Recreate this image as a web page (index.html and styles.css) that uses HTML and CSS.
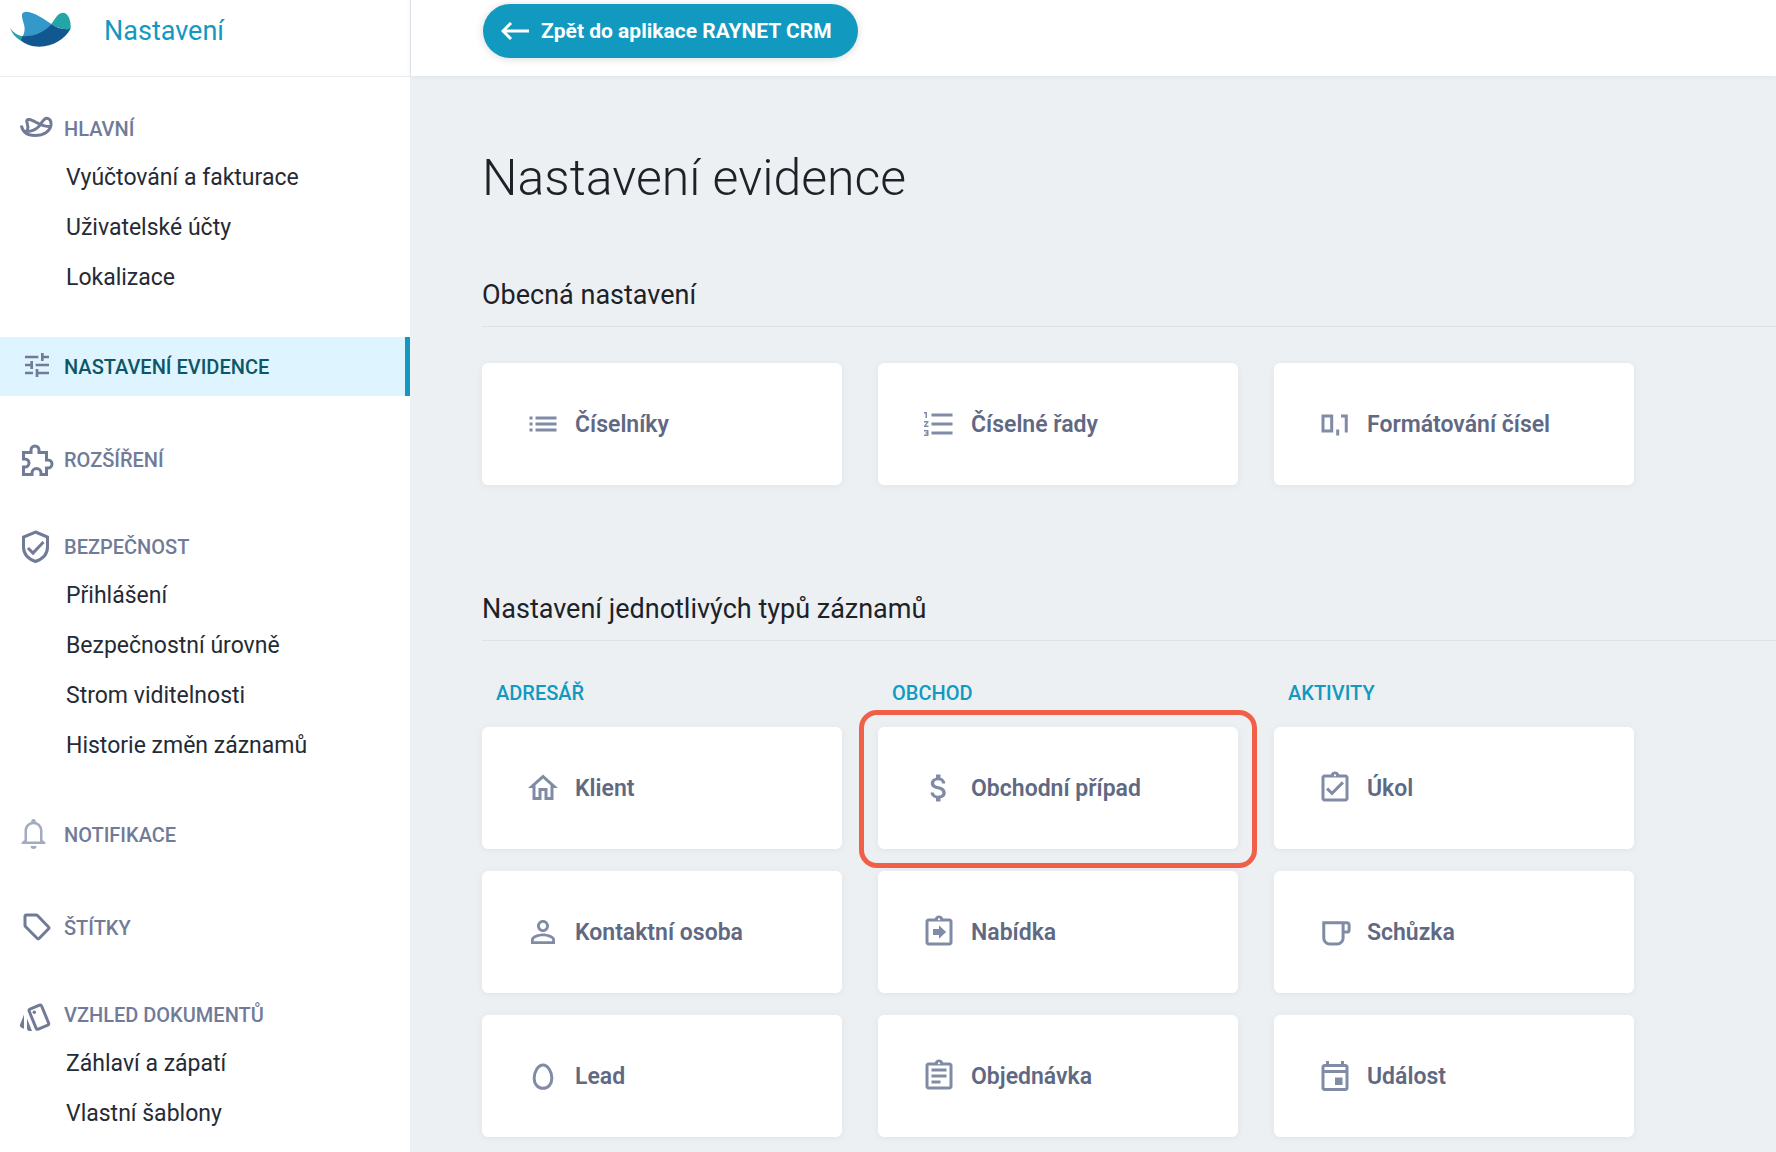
FILE: index.html
```html
<!DOCTYPE html>
<html lang="cs">

<head>
    <meta charset="utf-8">
    <title>Nastavení evidence</title>
    <meta name="viewport" content="width=device-width, initial-scale=1">
    <link rel="stylesheet" href="styles.css">
</head>

<body>
    <aside class="sidebar">
        <div class="brand">
            <svg class="brand-logo" viewBox="27 33 189 111">
                <path fill="#24a6a8" d="M30 83c10 15 24 25 42 25l-10 14C46 112 36 100 30 83z" />
                <path fill="#3498cb" d="M66 44c2-9 12-10 23-7 24 6 44 22 65 35-16 24-45 38-86 37 8-15 7-27 2-42-3-10-5-17-4-23z" />
                <path fill="#24a6a8" d="M154 72c10-13 18-33 34-34 17 0 26 23 24 50-22 1-42-4-58-16z" />
                <path fill="#10588f" d="M154 72c16 13 36 17 57 15-16 30-52 53-93 53-24 0-42-7-56-19l6-12c40 0 66-14 86-37z" />
            </svg>
            <span class="brand-name">Nastavení</span>
        </div>
        <nav class="nav">
            <div class="nav-group">
                <a class="nav-head" href="#">
                    <svg class="nav-icon line" viewBox="0 0 36 36">
                        <path d="M3.3 14.5c1.2 6 6 10 13.7 10 8.5 0 15-4 16-10.5.5-4-1.5-6.8-4.2-6.8-3.3 0-5 5-8 8.3-4 4-9.5 5.5-15 4.6" />
                        <path d="M9.5 19.5c1-4 .2-6-.6-8.5-.6-2.5 1.3-3 4-2.2 6 2 10 7 19.8 6.8" />
                    </svg>
                    Hlavní
                </a>
                <a class="nav-item" href="#">Vyúčtování a fakturace</a>
                <a class="nav-item" href="#">Uživatelské účty</a>
                <a class="nav-item" href="#">Lokalizace</a>
            </div>
            <a class="nav-head single active" href="#">
                <svg class="nav-icon" viewBox="0 0 36 36">
                    <path transform="translate(3 0) scale(1.333)" d="M3 17v2h6v-2H3zM3 5v2h10V5H3zm10 16v-2h8v-2h-8v-2h-2v6h2zM7 9v2H3v2h4v2h2V9H7zm14 4v-2H11v2h10zm-6-4h2V7h4V5h-4V3h-2v6z" />
                </svg>
                Nastavení evidence
            </a>
            <a class="nav-head single" href="#">
                <svg class="nav-icon line" viewBox="0 0 36 36">
                    <path d="M5.5 10.5H13V8a4 4 0 0 1 8 0v2.5h7.5V18H30a4 4 0 0 1 0 8h-1.5v6.5H23V31a4.5 4.5 0 0 0-9 0v1.5H5.5V25H7a4 4 0 0 0 0-8H5.5z" />
                </svg>
                Rozšíření
            </a>
            <div class="nav-group">
                <a class="nav-head" href="#">
                    <svg class="nav-icon line" viewBox="0 0 36 36">
                        <path d="M17.5 3l12 5v10c0 7-5 12-12 14.5-7-2.5-12-7.5-12-14.5V8z" />
                        <path d="M10 19l5 5L25.5 13" />
                    </svg>
                    Bezpečnost
                </a>
                <a class="nav-item" href="#">Přihlášení</a>
                <a class="nav-item" href="#">Bezpečnostní úrovně</a>
                <a class="nav-item" href="#">Strom viditelnosti</a>
                <a class="nav-item" href="#">Historie změn záznamů</a>
            </div>
            <a class="nav-head single" href="#">
                <svg class="nav-icon pale" viewBox="0 0 36 36">
                    <path fill-rule="evenodd" d="M15.5 2c1.400 0 2.300 1 2.300 2.200v.7c4 1 6.700 4.500 6.700 9V23l3 2.500V27h-24v-1.500l3-2.500v-9.100c0-4.500 2.700-8 6.700-9v-.7C13.200 3 14.100 2 15.500 2zm0 5.200c-4 0-6.500 3-6.500 7V24.500h13V14.200c0-4-2.500-7-6.500-7z" />
                    <path d="M12.5 29h6a3 3 0 0 1-6 0z" />
                </svg>
                Notifikace
            </a>
            <a class="nav-head single" href="#">
                <svg class="nav-icon line" viewBox="0 0 36 36">
                    <path d="M8.500 5H18c.7 0 1.200.2 1.700.7l10.600 11c.9.9.9 1.500 0 2.300l-9 9.300c-.8.8-1.400.8-2.200 0L7.700 16.800c-.5-.5-.7-1-.7-1.600V6.500C7 5.500 7.500 5 8.500 5z" />
                </svg>
                Štítky
            </a>
            <div class="nav-group">
                <a class="nav-head" href="#">
                    <svg class="nav-icon line" viewBox="0 0 36 36">
                        <path d="M12 12.200l9.500-4c1-.4 1.700-.1 2.100.8l7 17c.4 1 .1 1.700-.8 2.100l-9.500 4c-1 .4-1.700.1-2.100-.8l-7-17c-.4-1-.1-1.700.8-2.100z" />
                        <circle class="solid" cx="16.300" cy="15.300" r="1.700" />
                        <path class="solid" d="M9 21.500L14 34h-2.500C10 34 9 33 9 31.500zM6 17.500v14.200l-2.500-1c-1.400-.6-1.900-2-1.300-3.400z" />
                    </svg>
                    Vzhled dokumentů
                </a>
                <a class="nav-item" href="#">Záhlaví a zápatí</a>
                <a class="nav-item" href="#">Vlastní šablony</a>
            </div>
        </nav>
    </aside>

    <div class="page">
        <header class="topbar">
            <button class="back-button" type="button">
                <svg class="back-arrow" viewBox="0 0 28 18">
                    <path d="M10 1L2 9l8 8M2 9h26" />
                </svg>
                Zpět do aplikace RAYNET CRM
            </button>
        </header>
        <main class="content">
            <h1>Nastavení evidence</h1>

            <section>
                <h2>Obecná nastavení</h2>
                <div class="columns">
                    <a class="card" href="#">
                        <svg class="card-icon" viewBox="0 0 24 24">
                            <path d="M3 13h2v-2H3v2zm0 4h2v-2H3v2zm0-8h2V7H3v2zm4 4h14v-2H7v2zm0 4h14v-2H7v2zM7 7v2h14V7H7z" />
                        </svg>
                        Číselníky
                    </a>
                    <a class="card" href="#">
                        <svg class="card-icon" viewBox="0 0 24 24">
                            <path d="M2 17h2v.5H3v1h1v.5H2v1h3v-4H2v1zm1-9h1V4H2v1h1v3zm-1 3h1.800L2 13.100v.9h3v-1H3.200L5 10.900V10H2v1zm5-6v2h14V5H7zm0 14h14v-2H7v2zm0-6h14v-2H7v2z" />
                        </svg>
                        Číselné řady
                    </a>
                    <a class="card" href="#">
                        <svg class="card-icon line" viewBox="0 0 24 24">
                            <path d="M4 6.700h5.800v10H4zM13.800 15.700v4M16 6.700h3.500v11" />
                        </svg>
                        Formátování čísel
                    </a>
                </div>
            </section>

            <section>
                <h2>Nastavení jednotlivých typů záznamů</h2>
                <div class="columns">
                    <div class="column">
                        <h3>Adresář</h3>
                        <a class="card" href="#">
                            <svg class="card-icon" viewBox="0 0 24 24">
                                <path d="M12 5.690l5 4.500V18h-2v-6H9v6H7v-7.810l5-4.500M12 3L2 12h3v8h6v-6h2v6h6v-8h3L12 3z" />
                            </svg>
                            Klient
                        </a>
                        <a class="card" href="#">
                            <svg class="card-icon" viewBox="0 0 24 24">
                                <path d="M12 5.900c1.160 0 2.100.94 2.100 2.100s-.94 2.100-2.100 2.100S9.900 9.160 9.900 8s.94-2.100 2.100-2.100m0 9c2.970 0 6.100 1.460 6.100 2.100v1.100H5.900V17c0-.64 3.130-2.100 6.100-2.100M12 4C9.790 4 8 5.790 8 8s1.790 4 4 4 4-1.790 4-4-1.790-4-4-4zm0 9c-2.670 0-8 1.340-8 4v3h16v-3c0-2.660-5.330-4-8-4z" />
                            </svg>
                            Kontaktní osoba
                        </a>
                        <a class="card" href="#">
                            <svg class="card-icon line" viewBox="0 0 24 24">
                                <path d="M12 4.700c-3.300 0-5.900 4.600-5.900 8.800 0 3.900 2.400 6.700 5.900 6.700s5.900-2.800 5.900-6.700c0-4.200-2.600-8.800-5.900-8.800z" />
                            </svg>
                            Lead
                        </a>
                    </div>
                    <div class="column">
                        <h3>Obchod</h3>
                        <a class="card highlighted" href="#">
                            <svg class="card-icon" viewBox="0 0 24 24">
                                <path d="M11.800 10.900c-2.270-.59-3-1.200-3-2.150 0-1.090 1.010-1.850 2.700-1.850 1.780 0 2.440.85 2.500 2.100h2.210c-.07-1.720-1.120-3.300-3.210-3.810V3h-3v2.160c-1.940.42-3.500 1.680-3.500 3.610 0 2.310 1.910 3.460 4.700 4.130 2.500.6 3 1.480 3 2.410 0 .69-.49 1.790-2.700 1.790-2.060 0-2.870-.92-2.980-2.100h-2.200c.12 2.190 1.760 3.420 3.680 3.830V21h3v-2.150c1.950-.37 3.500-1.500 3.500-3.550 0-2.840-2.430-3.810-4.700-4.400z" />
                            </svg>
                            Obchodní případ
                        </a>
                        <a class="card" href="#">
                            <svg class="card-icon" viewBox="0 0 24 24">
                                <path d="M19 3h-4.180C14.400 1.840 13.300 1 12 1s-2.400.84-2.820 2H5c-1.100 0-2 .9-2 2v14c0 1.100.9 2 2 2h14c1.100 0 2-.9 2-2V5c0-1.100-.9-2-2-2zm-7-.25c.41 0 .75.34.75.75s-.34.75-.75.75-.75-.34-.75-.75.34-.75.75-.75zM19 19H5V5h14v14z" />
                                <path d="M12 16.500V14H8v-4h4V7.500l4.700 4.500z" />
                            </svg>
                            Nabídka
                        </a>
                        <a class="card" href="#">
                            <svg class="card-icon" viewBox="0 0 24 24">
                                <path d="M19 3h-4.180C14.400 1.840 13.300 1 12 1s-2.400.84-2.820 2H5c-1.100 0-2 .9-2 2v14c0 1.100.9 2 2 2h14c1.100 0 2-.9 2-2V5c0-1.100-.9-2-2-2zm-7-.25c.41 0 .75.34.75.75s-.34.75-.75.75-.75-.34-.75-.75.34-.75.75-.75zM19 19H5V5h14v14z" />
                                <path d="M7 7h10v2H7zm0 4h10v2H7zm0 4h6v2H7z" />
                            </svg>
                            Objednávka
                        </a>
                    </div>
                    <div class="column">
                        <h3>Aktivity</h3>
                        <a class="card" href="#">
                            <svg class="card-icon" viewBox="0 0 24 24">
                                <path d="M19 3h-4.180C14.400 1.840 13.300 1 12 1s-2.400.84-2.820 2H5c-1.100 0-2 .9-2 2v14c0 1.100.9 2 2 2h14c1.100 0 2-.9 2-2V5c0-1.100-.9-2-2-2zm-7-.25c.41 0 .75.34.75.75s-.34.75-.75.75-.75-.34-.75-.75.34-.75.75-.75zM19 19H5V5h14v14z" />
                                <path d="M17.990 9l-1.410-1.420-6.590 6.590-2.580-2.570-1.420 1.410 4 3.990z" />
                            </svg>
                            Úkol
                        </a>
                        <a class="card" href="#">
                            <svg class="card-icon line" viewBox="0 0 24 24">
                                <path d="M4.500 5.800H20a1.400 1.400 0 0 1 1.400 1.400v3.400A1.400 1.400 0 0 1 20 12h-2.600M4.500 4.800V16a4 4 0 0 0 4 4h4.900a4 4 0 0 0 4-4V5.800" />
                            </svg>
                            Schůzka
                        </a>
                        <a class="card" href="#">
                            <svg class="card-icon" viewBox="0 0 24 24">
                                <path d="M19 4h-1V2h-2v2H8V2H6v2H5c-1.110 0-1.990.9-1.990 2L3 20c0 1.100.89 2 2 2h14c1.100 0 2-.9 2-2V6c0-1.100-.9-2-2-2zm0 16H5V10h14v10zm0-12H5V6h14v2zM12 13h5v5h-5z" />
                            </svg>
                            Událost
                        </a>
                    </div>
                </div>
            </section>
        </main>
    </div>
</body>

</html>
```
FILE: styles.css
```css
* {
    box-sizing: border-box;
}

body {
    margin: 0;
    min-height: 100vh;
    display: flex;
    background-color: #ecf0f3;
    font-family: Roboto, "Liberation Sans", sans-serif;
    color: #1d2229;
}

a {
    color: inherit;
    text-decoration: none;
}

svg {
    flex: none;
    fill: currentColor;
}

.line {
    fill: none;
    stroke: currentColor;
}

.line .solid {
    fill: currentColor;
    stroke: none;
}

/* sidebar */
.sidebar {
    flex: none;
    width: 410px;
    background-color: #fff;
}

.brand {
    display: flex;
    height: 77px;
    padding: 11px 9px;
    gap: 32px;
    border-bottom: 1px solid #e8ecf0;
}

.brand-logo {
    width: 63px;
    height: 37px;
}

.brand-name {
    font-size: 27px;
    line-height: 40px;
    color: #1299bf;
}

.nav {
    display: flex;
    flex-direction: column;
    gap: 34px;
    padding-top: 28px;
}

.nav-head {
    display: flex;
    align-items: center;
    height: 48px;
    padding-left: 18px;
    gap: 10px;
    font-size: 20px;
    font-weight: 500;
    text-transform: uppercase;
    color: #717b98;
}

.nav-head.single {
    height: 59px;
}

.nav-head.active {
    background-color: #def4ff;
    border-right: 5px solid #1299bf;
    color: #0b5767;
}

.nav-icon {
    width: 36px;
    height: 36px;
    color: #717b98;
    stroke-width: 3px;
}

.nav-icon.pale {
    color: #a3abc0;
}

.nav-item {
    display: block;
    padding-left: 66px;
    font-size: 23px;
    line-height: 50px;
    color: #252b36;
}

/* right side */
.page {
    flex: 1;
    min-width: 0;
}

.topbar {
    height: 76px;
    padding: 4px 72px;
    background-color: #fff;
    border-left: 1px solid #dce1e9;
    box-shadow: 0 1px 6px rgba(0, 0, 0, 0.05);
}

.back-button {
    display: flex;
    align-items: center;
    height: 54px;
    padding: 0 26px 0 18px;
    gap: 12px;
    border: none;
    border-radius: 27px;
    background-color: #1299bf;
    box-shadow: 0 1px 8px rgba(0, 0, 0, 0.15);
    color: #fff;
    font-family: inherit;
    font-size: 21px;
    font-weight: 700;
}

.back-arrow {
    width: 28px;
    height: 18px;
    fill: none;
    stroke: currentColor;
    stroke-width: 3px;
}

.content {
    padding: 72px 0 14px 72px;
}

h1 {
    margin: 0 0 67px;
    font-size: 50px;
    line-height: 60px;
    font-weight: 300;
}

h2 {
    margin: 0 0 36px;
    padding-bottom: 11px;
    border-bottom: 1px solid #dde2e7;
    font-size: 27px;
    line-height: 40px;
    font-weight: 400;
}

section + section {
    margin-top: 104px;
}

.columns {
    display: grid;
    grid-template-columns: repeat(3, minmax(0, 360px));
    gap: 36px;
}

.column {
    display: flex;
    flex-direction: column;
    gap: 22px;
}

h3 {
    margin: 4px 14px 0;
    font-size: 20px;
    line-height: 24px;
    font-weight: 500;
    text-transform: uppercase;
    color: #1299bf;
}

.card {
    position: relative;
    display: flex;
    align-items: center;
    height: 122px;
    padding: 0 43px;
    gap: 14px;
    border-radius: 6px;
    background-color: #fff;
    box-shadow: 0 1px 8px rgba(0, 0, 0, 0.05);
    font-size: 23px;
    font-weight: 600;
    color: #5f6983;
}

.card-icon {
    width: 36px;
    height: 36px;
    color: #808ba6;
    stroke-width: 2px;
}

.highlighted::after {
    content: "";
    position: absolute;
    inset: -17px -19px -19px;
    border: 5px solid #f06048;
    border-radius: 18px;
}
```
